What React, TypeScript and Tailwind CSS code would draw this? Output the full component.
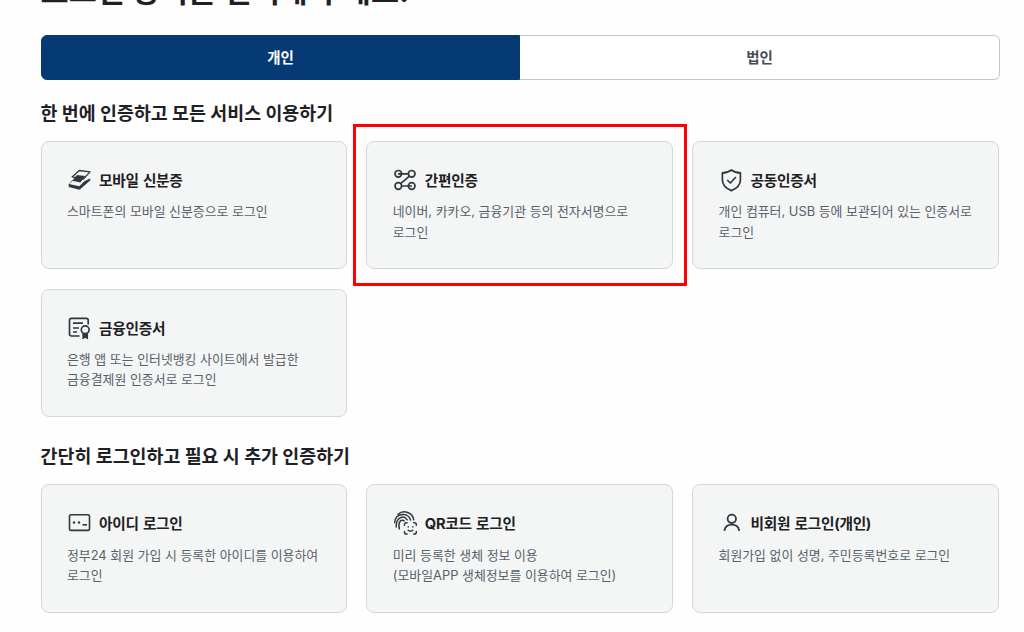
import type { ReactNode } from "react";

type LoginMethod = {
  title: string;
  desc: string[];
  icon: ReactNode;
  marked?: boolean;
};

const MobileIdIcon = () => (
  <svg width="24" height="24" viewBox="0 0 24 24" fill="none">
    <path d="M12.3 2.5 23 3.9 16.4 11 5.1 8.9Z" stroke="#33363d" strokeWidth="1.3" strokeLinejoin="round" />
    <path d="M10 7 18.1 8.1 13.4 14.6 5.2 12.8Z" fill="#33363d" />
    <path d="M6 12.6 2.1 16 12.3 18.2 17.3 13.2 23.2 10.6 23.4 12.3 13.2 21.3 12.3 21.8 1.8 19.1 1.6 16.3 5 12.5Z" fill="#33363d" />
  </svg>
);

const SimpleAuthIcon = () => (
  <svg width="24" height="24" viewBox="0 0 24 24" fill="none" stroke="#33363d" strokeWidth="1.7">
    <circle cx="5.3" cy="5.8" r="3.3" />
    <circle cx="18.7" cy="5.8" r="3.3" />
    <circle cx="5.3" cy="18" r="3.3" />
    <circle cx="18.7" cy="18" r="3.3" />
    <path d="M5 5.8h10.5M16.5 8.2 7.6 15.6M8.5 18H19" />
  </svg>
);

const ShieldIcon = () => (
  <svg width="24" height="24" viewBox="0 0 24 24" fill="none" stroke="#33363d" strokeWidth="1.7" strokeLinejoin="round">
    <path d="M12.4 2C9.8 4 6.8 4.9 3.4 4.9V12C3.4 17.2 7.1 20.4 12.4 22.6 17.7 20.4 21.4 17.2 21.4 12V4.9C18 4.9 15 4 12.4 2Z" />
    <path d="m8.2 12 3.1 3 5.6-6" />
  </svg>
);

const CertificateIcon = () => (
  <svg width="24" height="24" viewBox="0 0 24 24" fill="none" stroke="#33363d" strokeWidth="1.7">
    <path d="M12.5 20H4.5C3.2 20 2.5 19.2 2.5 18V4.3C2.5 3.1 3.2 2.3 4.5 2.3H19C20.3 2.3 21.2 3.1 21.2 4.3V8.6" />
    <path d="M6 7.2h10M6 12h6M6 16h4" />
    <circle cx="18.2" cy="13.8" r="3.9" />
    <path d="M16.2 17.6v4.4l2-1.3 2 1.3V17.6" fill="#33363d" />
  </svg>
);

const PasswordIcon = () => (
  <svg width="24" height="24" viewBox="0 0 24 24" fill="none" stroke="#33363d" strokeWidth="1.6">
    <rect x="2.5" y="3.8" width="20" height="15.6" rx="1.5" />
    <path d="M15.5 13.8H20" />
    <circle cx="7" cy="11.5" r="1.2" fill="#33363d" stroke="none" />
    <circle cx="12" cy="11.5" r="1.2" fill="#33363d" stroke="none" />
  </svg>
);

const BioIcon = () => (
  <svg width="26" height="26" viewBox="0 0 26 26" fill="none" stroke="#33363d" strokeWidth="1.5" strokeLinecap="round">
    <path d="M5 4.2C10.5-.5 19.8 2.3 20.7 9.8" />
    <path d="M1.7 12.5C2.6 2.2 15.5 2.2 17.5 10" />
    <path d="M3.2 17C2.8 7.5 10.5 4.4 14.2 9.8" />
    <path d="M6.3 18.8C5 12.6 7.6 8.5 11.2 10.8" />
    <path d="M11.5 15.3v-.8c0-1.1.7-1.8 1.8-1.8h.8M20.7 12.7h.8c1.1 0 1.8.7 1.8 1.8v.8M11.5 21.5v.8c0 1.1.7 1.8 1.8 1.8h.8M20.7 24.1h.8c1.1 0 1.8-.7 1.8-1.8v-.8" />
    <path d="M15.2 16.7v.3M19.9 16.7v.3M15.2 20.3c1.2 1.2 3.4 1.2 4.6 0" />
  </svg>
);

const UserIcon = () => (
  <svg width="24" height="24" viewBox="0 0 24 24" fill="none" stroke="#33363d" strokeWidth="1.8" strokeLinecap="round">
    <circle cx="12.8" cy="7.8" r="4.2" />
    <path d="M5.5 19.2C7 11.8 18.6 11.8 20.1 19.2" />
  </svg>
);

const ssoMethods: LoginMethod[] = [
  { title: "모바일 신분증", desc: ["스마트폰의 모바일 신분증으로 로그인"], icon: <MobileIdIcon /> },
  { title: "간편인증", desc: ["네이버, 카카오, 금융기관 등의 전자서명으로", "로그인"], icon: <SimpleAuthIcon />, marked: true },
  { title: "공동인증서", desc: ["개인 컴퓨터, USB 등에 보관되어 있는 인증서로", "로그인"], icon: <ShieldIcon /> },
  { title: "금융인증서", desc: ["은행 앱 또는 인터넷뱅킹 사이트에서 발급한", "금융결제원 인증서로 로그인"], icon: <CertificateIcon /> },
];

const simpleMethods: LoginMethod[] = [
  { title: "아이디 로그인", desc: ["정부24 회원 가입 시 등록한 아이디를 이용하여", "로그인"], icon: <PasswordIcon /> },
  { title: "QR코드 로그인", desc: ["미리 등록한 생체 정보 이용", "(모바일APP 생체정보를 이용하여 로그인)"], icon: <BioIcon /> },
  { title: "비회원 로그인(개인)", desc: ["회원가입 없이 성명, 주민등록번호로 로그인"], icon: <UserIcon /> },
];

const MethodCard = ({ title, desc, icon, marked }: LoginMethod) => (
  <div className="relative rounded-lg border border-[#d3d8dc] bg-[#f4f6f6] pl-[25.4px] pt-[26px]">
    <div className="flex h-6 items-center">
      <span className="flex w-[32px] shrink-0 items-center [&>svg]:shrink-0">{icon}</span>
      <h3 className="whitespace-nowrap pt-[2px] text-[14.7px] font-bold tracking-[-0.28px] text-[#1e2124] [word-spacing:1px]">{title}</h3>
    </div>
    <p className="mt-[10.4px] whitespace-nowrap text-[12.9px] leading-[20.4px] text-[#58616a]">
      {desc.map((line) => (
        <span key={line} className="block">{line}</span>
      ))}
    </p>
    {marked && (
      <div className="pointer-events-none absolute -left-[14px] -right-[15px] -top-[18px] -bottom-[18px] border-[3px] border-[#ff0000]" />
    )}
  </div>
);

const App = () => {
  return (
    <main className="h-[632px] overflow-hidden bg-[#fefefe] pl-[40.6px] pr-[24.4px] font-['Inter','Noto_Sans_CJK_KR',sans-serif]">
      <h1 className="-mt-[33px] h-[68.4px] whitespace-nowrap text-[30.5px] font-bold leading-[48px] text-[#1e2124]">
        로그인 방식을 선택해 주세요.
      </h1>

      <div className="flex h-[44.6px] text-[14.5px] font-bold">
        <button className="w-[479.8px] rounded-l-md border border-[#063a74] bg-[#063a74] text-white">개인</button>
        <button className="flex-1 rounded-r-md border border-l-0 border-[#c3c7cc] bg-white text-[#464c53]">법인</button>
      </div>

      <h2 className="mt-[19px] h-[42px] whitespace-nowrap text-[18.4px] font-bold leading-[28px] text-[#1e2124]">
        한 번에 인증하고 모든 서비스 이용하기
      </h2>
      <div className="grid auto-rows-[128.2px] grid-cols-[306.6px_306.6px_306.6px] gap-x-[19.2px] gap-y-[19.4px]">
        {ssoMethods.map((m) => (
          <MethodCard key={m.title} {...m} />
        ))}
      </div>

      <h2 className="mt-[25px] h-[42.4px] whitespace-nowrap text-[18.4px] font-bold leading-[28px] text-[#1e2124]">
        간단히 로그인하고 필요 시 추가 인증하기
      </h2>
      <div className="grid auto-rows-[128.5px] grid-cols-[306.6px_306.6px_306.6px] gap-x-[19.2px]">
        {simpleMethods.map((m) => (
          <MethodCard key={m.title} {...m} />
        ))}
      </div>
    </main>
  );
};

export default App;
